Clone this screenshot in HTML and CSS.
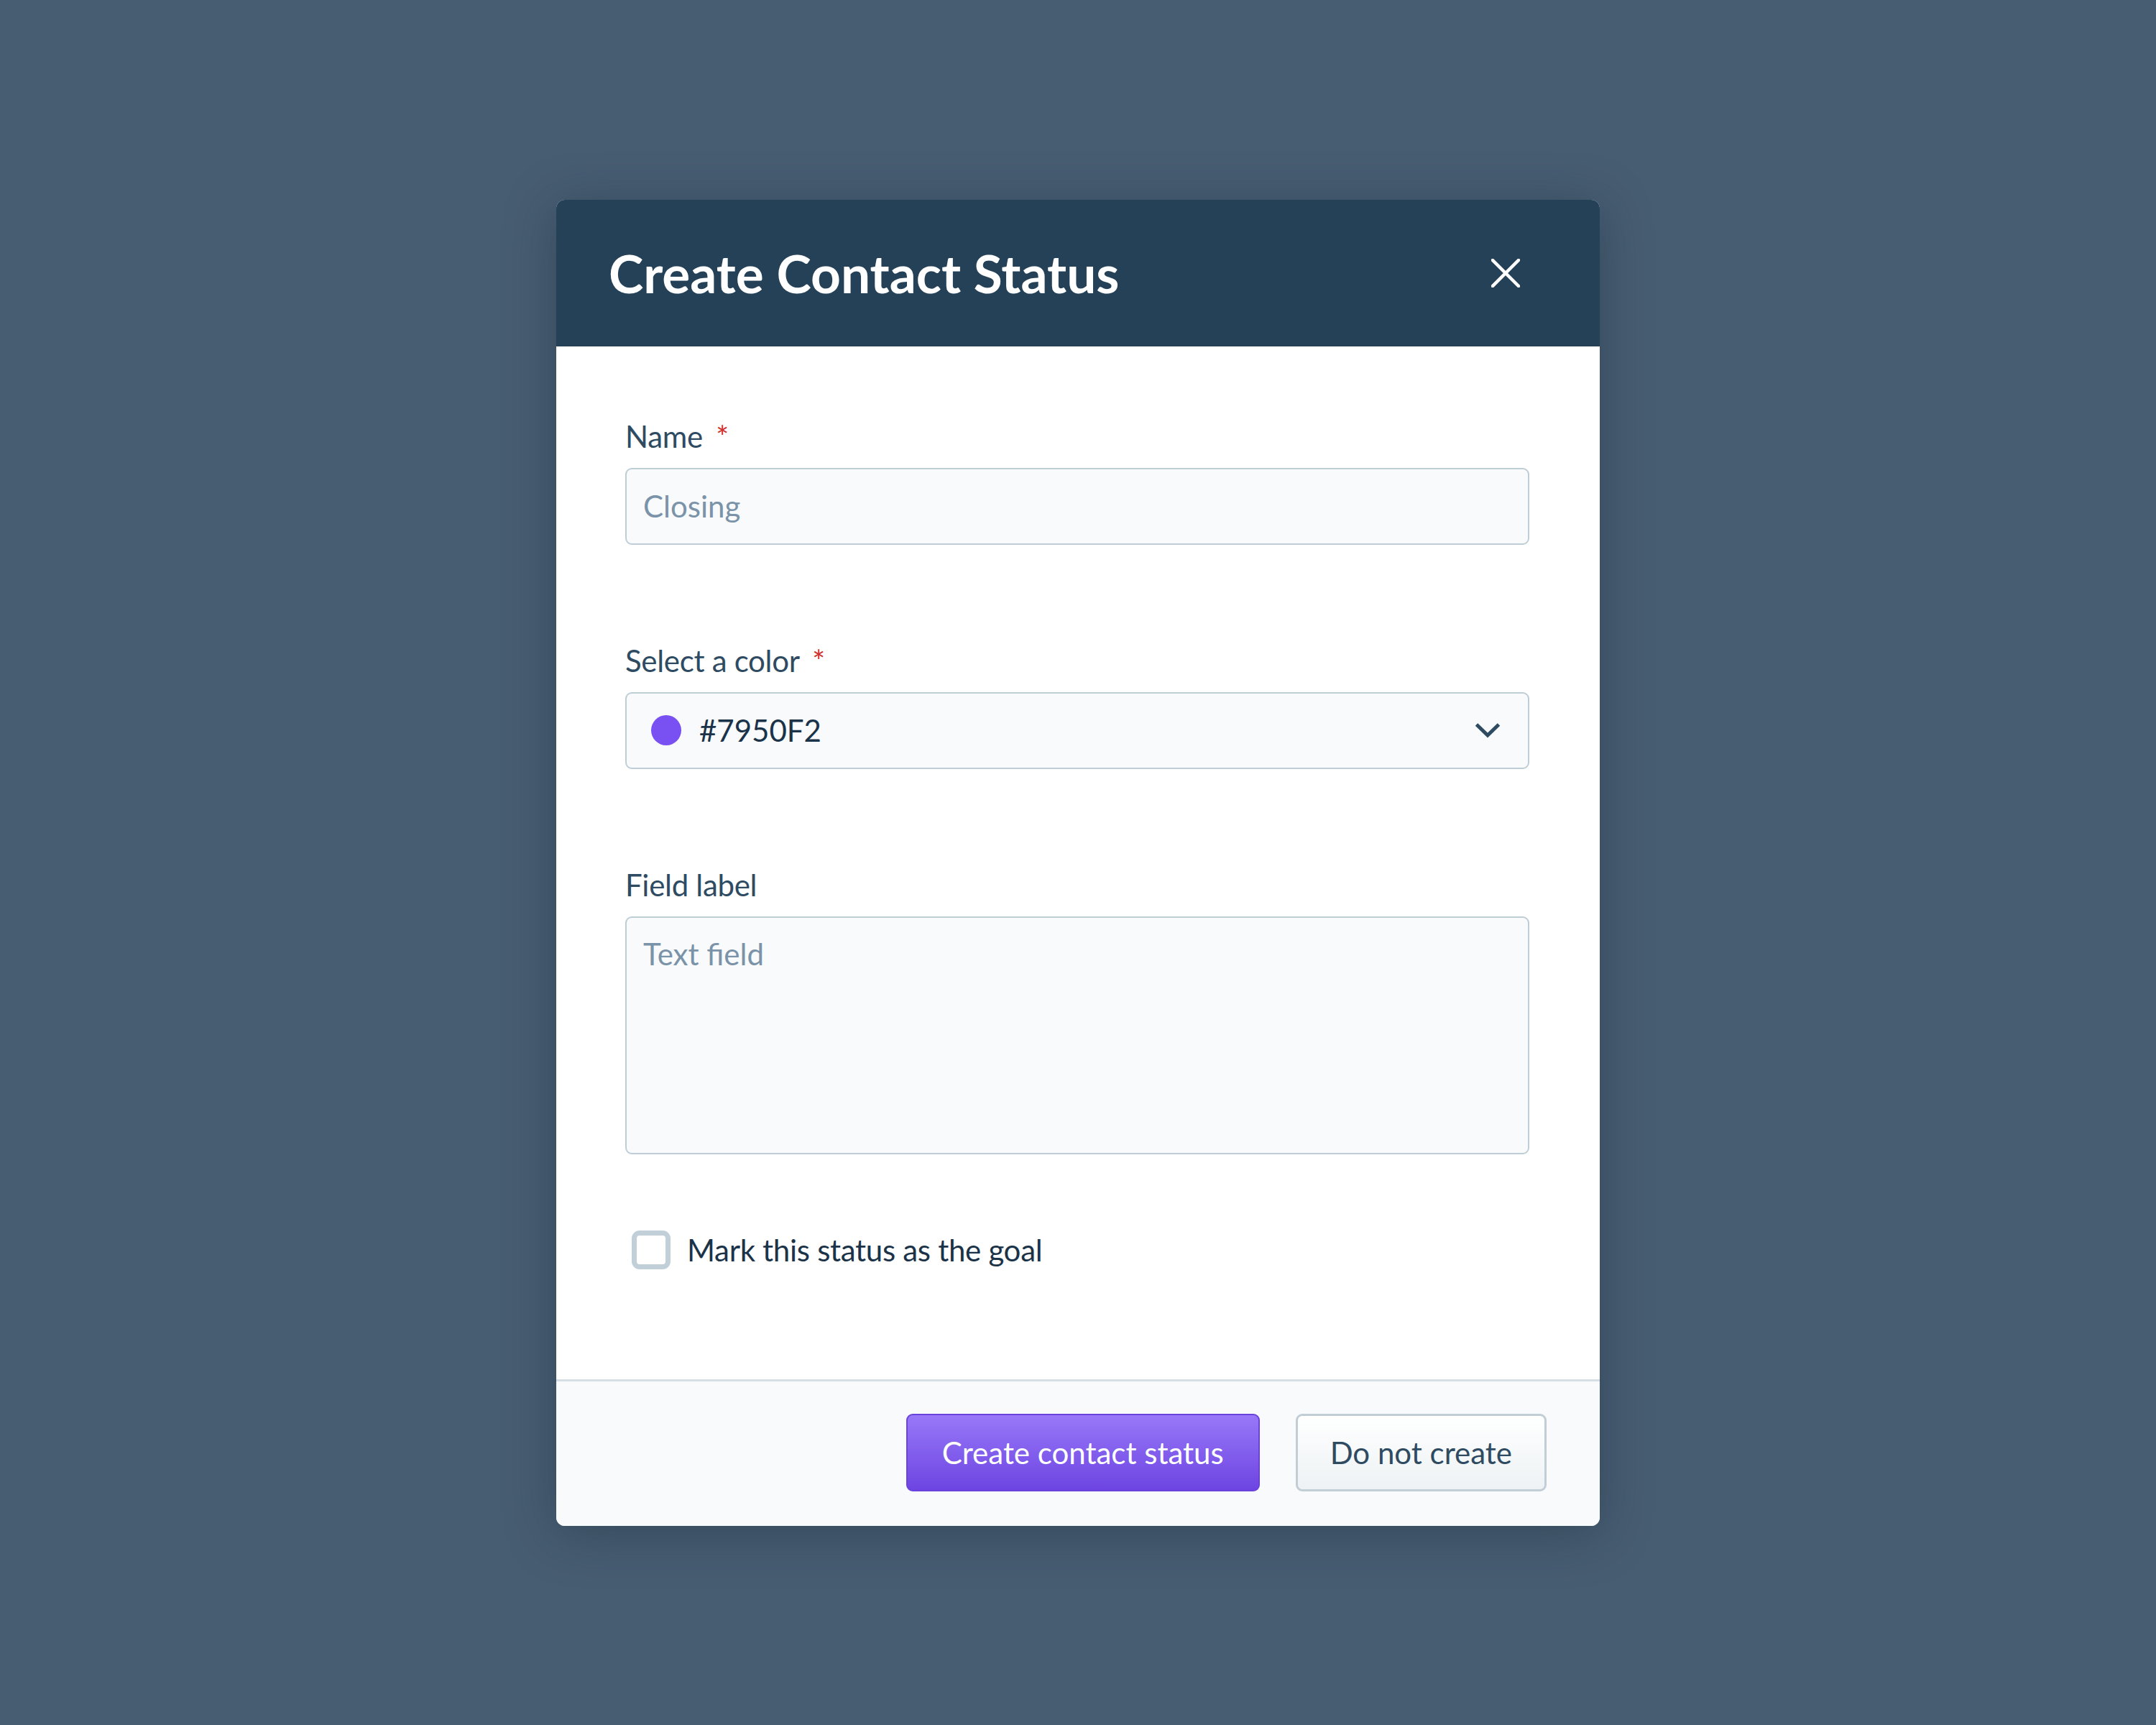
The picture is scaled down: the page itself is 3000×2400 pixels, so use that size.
FILE: index.html
```html
<!DOCTYPE html>
<html lang="en">
<head>
<meta charset="utf-8">
<title>Create Contact Status</title>
<link rel="stylesheet" href="styles.css">
</head>
<body>
<div class="backdrop">
  <div class="modal" role="dialog" aria-labelledby="modal-title">
    <div class="modal-header">
      <h1 id="modal-title" class="modal-title">Create Contact Status</h1>
      <button class="close-btn" aria-label="Close">
        <svg width="40" height="40" viewBox="0 0 40 40"><path d="M2 2 L38 38 M38 2 L2 38" stroke="#ffffff" stroke-width="4.5" stroke-linecap="square" fill="none"/></svg>
      </button>
    </div>
    <div class="modal-body">
      <div class="field">
        <label class="label">Name <span class="req">*</span></label>
        <div class="input"><span class="placeholder">Closing</span></div>
      </div>
      <div class="field">
        <label class="label">Select a color <span class="req">*</span></label>
        <div class="input select">
          <span class="swatch"></span>
          <span class="value">#7950F2</span>
          <svg class="chevron" width="36" height="22" viewBox="0 0 36 22"><path d="M2.5 3 L18 18 L33.5 3" stroke="#2f4b62" stroke-width="5" fill="none"/></svg>
        </div>
      </div>
      <div class="field field-area">
        <label class="label">Field label</label>
        <div class="input textarea"><span class="placeholder">Text field</span></div>
      </div>
      <div class="check-row">
        <span class="checkbox"></span>
        <span class="check-text">Mark this status as the goal</span>
      </div>
    </div>
    <div class="modal-footer">
      <button class="btn btn-primary">Create contact status</button>
      <button class="btn btn-secondary">Do not create</button>
    </div>
  </div>
</div>
</body>
</html>
```
FILE: styles.css
```css
html, body {
  margin: 0;
  padding: 0;
}
body {
  background: #475d72;
  font-family: Lato, "Open Sans", sans-serif;
}
.backdrop {
  width: 3000px;
  height: 2400px;
  display: flex;
  align-items: center;
  justify-content: center;
}
.modal {
  width: 1452px;
  border-radius: 12px;
  overflow: hidden;
  background: #ffffff;
  box-shadow: 0 10px 70px rgba(20, 35, 50, 0.35);
}
.modal-header {
  height: 204px;
  background: #254157;
  display: flex;
  align-items: center;
  justify-content: space-between;
  padding: 0 111px 0 73px;
}
.modal-title {
  margin: 0;
  color: #ffffff;
  font-weight: 700;
  font-size: 73px;
  line-height: 80px;
  letter-spacing: 0;
}
.close-btn {
  background: none;
  border: 0;
  padding: 0;
  width: 40px;
  height: 40px;
  display: flex;
}
.modal-body {
  padding: 100px 98px 153px 96px;
}
.field {
  display: flex;
  flex-direction: column;
  gap: 19px;
  margin-bottom: 136px;
}
.field-area {
  margin-bottom: 106px;
}
.label {
  font-size: 42px;
  line-height: 50px;
  letter-spacing: -0.3px;
  color: #2f4b62;
}
.req {
  color: #d0302b;
  margin-left: 8px;
}
.input {
  box-sizing: border-box;
  height: 107px;
  border: 2.5px solid #bfcdd7;
  border-radius: 9px;
  background: #f8fafc;
  display: flex;
  align-items: center;
  padding: 0 23px;
  font-size: 42px;
  line-height: 50px;
}
.placeholder {
  color: #7a93a8;
}
.select {
  padding: 0 22px 0 34px;
}
.swatch {
  width: 42px;
  height: 42px;
  border-radius: 50%;
  background: #7950f2;
  flex: none;
}
.value {
  color: #1b3349;
  margin-left: 25px;
  flex: 1;
}
.chevron {
  margin-right: 16px;
}
.textarea {
  height: 331px;
  align-items: flex-start;
  padding-top: 25px;
}
.check-row {
  display: flex;
  align-items: center;
  height: 54px;
  padding-left: 9px;
}
.checkbox {
  box-sizing: border-box;
  width: 54px;
  height: 54px;
  border: 7px solid #c1cfd9;
  border-radius: 11px;
  background: #ffffff;
  flex: none;
}
.check-text {
  margin-left: 23px;
  font-size: 42px;
  line-height: 50px;
  letter-spacing: -0.3px;
  color: #1b3349;
}
.modal-footer {
  border-top: 3px solid #d5dfe5;
  background: #f8fafb;
  padding: 45px 74px 48px;
  display: flex;
  justify-content: flex-end;
  gap: 50px;
}
.btn {
  box-sizing: border-box;
  height: 108px;
  padding: 0 48px;
  border-radius: 9px;
  font-family: Lato, "Open Sans", sans-serif;
  font-size: 42px;
  line-height: 50px;
}
.btn-primary {
  background: linear-gradient(#9878f8, #6d44e2);
  border: 2px solid #6a43dc;
  color: #ffffff;
}
.btn-secondary {
  padding: 0 45px;
  background: linear-gradient(#ffffff, #edf2f4);
  border: 3px solid #c2ced6;
  color: #2f4b62;
}
```
